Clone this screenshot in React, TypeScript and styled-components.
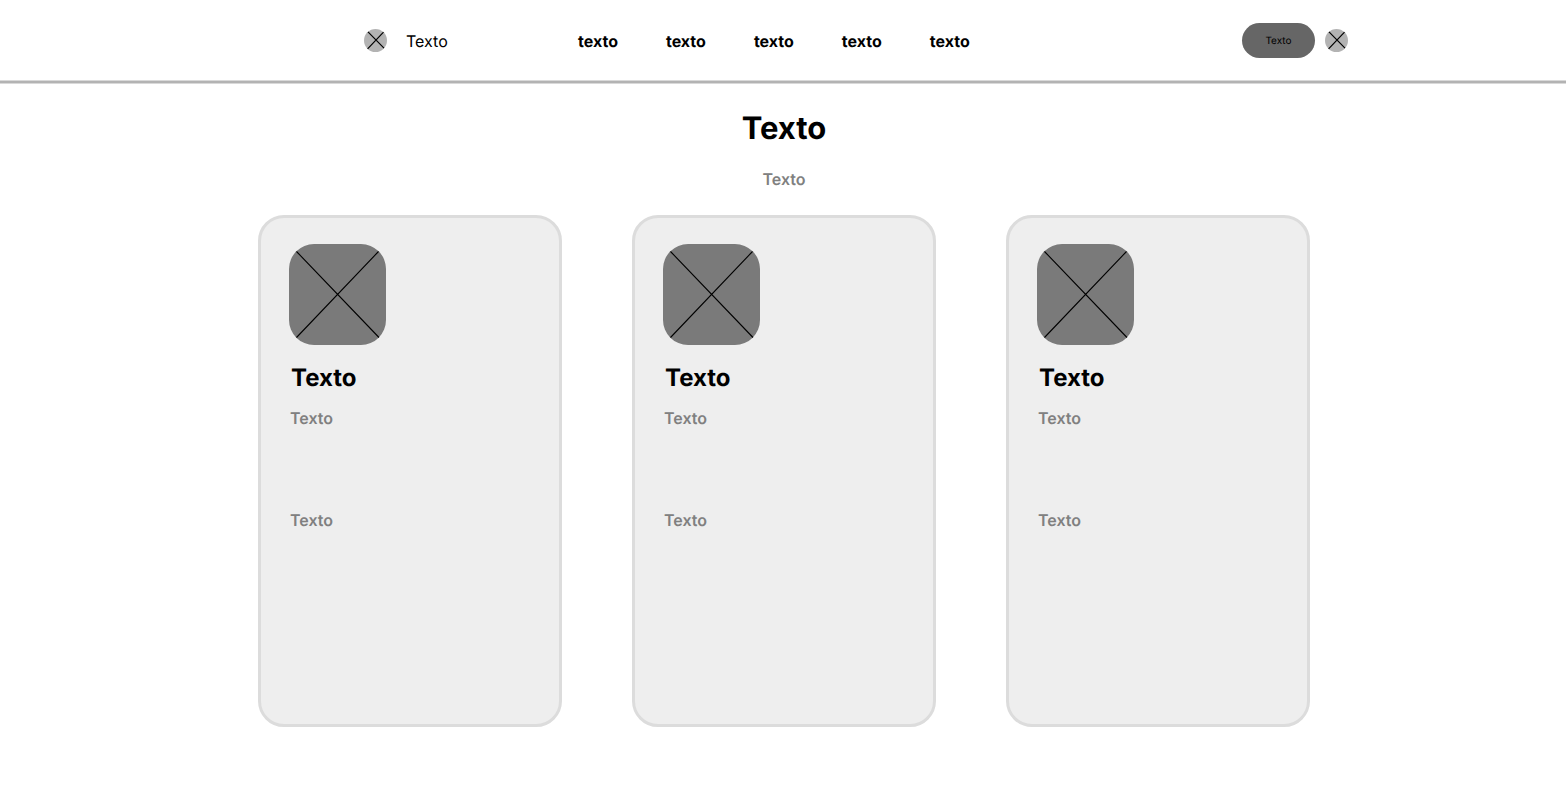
import React from "react";
import styled, { createGlobalStyle } from "styled-components";

const GlobalStyle = createGlobalStyle`
  *, *::before, *::after { box-sizing: border-box; }
  body {
    margin: 0;
    background: #fff;
    color: #000;
    font-family: Inter, "Liberation Sans", sans-serif;
    font-size: 16px;
    line-height: 20px;
    text-rendering: geometricPrecision;
    -webkit-font-smoothing: antialiased;
  }
  h1, h2, p, ul { margin: 0; padding: 0; }
`;

const Header = styled.header`
  display: flex;
  align-items: center;
  height: 83px;
  padding: 0 218px 0 364px;
  border-bottom: 2px solid #b3b3b3;
  box-shadow: 0 1px 0 #d9d9d9, inset 0 -1px 0 #d9d9d9;
`;

const Brand = styled.a`
  display: flex;
  align-items: center;
  gap: 19px;
  min-width: 86px;
  color: inherit;
  text-decoration: none;
`;

const Nav = styled.nav`
  margin-left: 128px;
`;

const NavList = styled.ul`
  display: flex;
  gap: 48px;
  list-style: none;
`;

const NavLink = styled.a`
  display: block;
  color: inherit;
  font-weight: 700;
  text-decoration: none;
`;

const Actions = styled.div`
  display: flex;
  align-items: center;
  gap: 10px;
  margin-left: auto;
`;

const ActionButton = styled.button`
  width: 73px;
  height: 35px;
  padding: 0;
  border: 0;
  border-radius: 18px;
  background: #666;
  color: #000;
  font: inherit;
  font-size: 10px;
  text-rendering: inherit;
`;

const IconButton = styled.button`
  display: block;
  padding: 0;
  border: 0;
  background: none;
`;

const CrossSvg = styled.svg`
  display: block;
`;

const Main = styled.main`
  display: flex;
  flex-direction: column;
  align-items: center;
  padding: 26px 0 68px 2px;
`;

const Title = styled.h1`
  font-size: 31px;
  line-height: 40px;
  font-weight: 700;
`;

const Muted = styled.p`
  color: #808080;
  font-weight: 600;
`;

const Subtitle = styled(Muted)`
  margin-top: 20px;
`;

const Cards = styled.section`
  display: flex;
  flex-wrap: wrap;
  justify-content: center;
  gap: 70px;
  margin-top: 26px;
`;

const Card = styled.article`
  display: flex;
  flex-direction: column;
  width: 304px;
  min-height: 512px;
  padding: 26px 28px;
  border: 3px solid #dcdcdc;
  border-radius: 26px;
  background: #eee;
`;

const CardTitle = styled.h2`
  margin: 17px 0 14px 2px;
  font-size: 24px;
  line-height: 32px;
  font-weight: 700;
`;

const CardText = styled(Muted)`
  margin-left: 1px;
`;

const CardFooter = styled(CardText)`
  margin-top: 82px;
`;

const RoundCross = () => (
  <CrossSvg width="23" height="23" viewBox="0 0 23 23" aria-hidden="true">
    <circle cx="11.5" cy="11.5" r="11.5" fill="#b3b3b3" />
    <path d="M4 2.8 20 19.2M19.5 3.2 3.6 19.9" stroke="#000" strokeWidth="1.2" />
  </CrossSvg>
);

const PicturePlaceholder = () => (
  <CrossSvg width="97" height="101" viewBox="0 0 97 101" aria-hidden="true">
    <rect width="97" height="101" rx="25" fill="#7a7a7a" />
    <path d="M7.5 7.5 90 93.5M89.5 7.5 7.5 93.5" stroke="#000" strokeWidth="1.1" />
  </CrossSvg>
);

const links = ["texto", "texto", "texto", "texto", "texto"];
const cards = [
  { title: "Texto", text: "Texto", note: "Texto" },
  { title: "Texto", text: "Texto", note: "Texto" },
  { title: "Texto", text: "Texto", note: "Texto" },
];

export default function App() {
  return (
    <>
      <GlobalStyle />
      <Header>
        <Brand href="#">
          <RoundCross />
          Texto
        </Brand>
        <Nav>
          <NavList>
            {links.map((label, i) => (
              <li key={i}>
                <NavLink href="#">{label}</NavLink>
              </li>
            ))}
          </NavList>
        </Nav>
        <Actions>
          <ActionButton type="button">Texto</ActionButton>
          <IconButton type="button">
            <RoundCross />
          </IconButton>
        </Actions>
      </Header>
      <Main>
        <Title>Texto</Title>
        <Subtitle>Texto</Subtitle>
        <Cards>
          {cards.map((card, i) => (
            <Card key={i}>
              <PicturePlaceholder />
              <CardTitle>{card.title}</CardTitle>
              <CardText>{card.text}</CardText>
              <CardFooter>{card.note}</CardFooter>
            </Card>
          ))}
        </Cards>
      </Main>
    </>
  );
}
